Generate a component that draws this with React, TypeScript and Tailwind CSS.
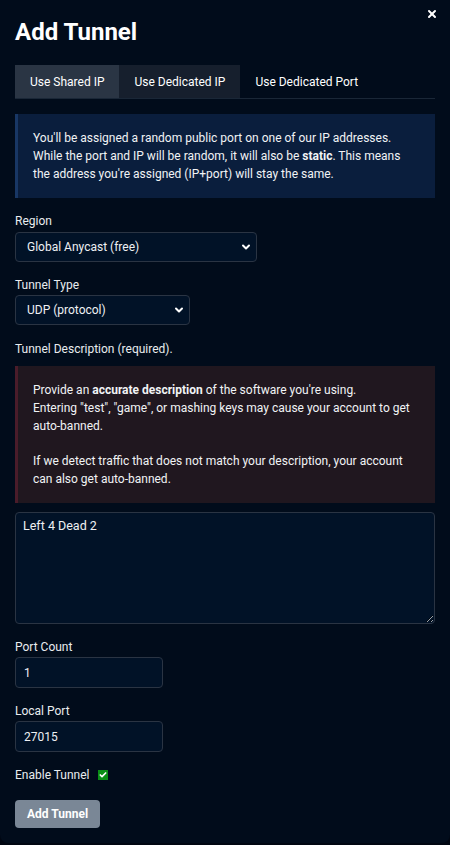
import { ChevronDown, X, Check } from 'lucide-react';

const tabs = [
  { label: 'Use Shared IP', cls: 'bg-[#2a3544]' },
  { label: 'Use Dedicated IP', cls: 'bg-[#161f2d]' },
  { label: 'Use Dedicated Port', cls: '' },
];

function Select({ value, width }: { value: string; width: string }) {
  return (
    <div
      className={`${width} h-[30px] flex items-center justify-between pl-[11px] pr-[4px] bg-[#011227] border border-[#2a3443] rounded-[4px] text-[12px] text-[#eef0f3]`}
    >
      <span>{value}</span>
      <ChevronDown className="w-[12px] h-[12px] text-white" strokeWidth={4} />
    </div>
  );
}

export default function App() {
  return (
    <div className="min-h-[845px] bg-[#000611] font-['Roboto','Liberation_Sans',sans-serif]">
      <div className="w-[450px] h-[843px] bg-[#010c1b] rounded-b-[8px] px-[15px] text-[#e9ecef] text-[12px] leading-[18px]">
        {/* Header */}
        <div className="flex justify-end pt-[8px] h-[20px]">
          <button className="-mr-[3px] text-white">
            <X className="w-[12px] h-[12px]" strokeWidth={4} />
          </button>
        </div>
        <h1 className="text-[24px] leading-[30px] font-bold text-white mt-[-3px]">Add Tunnel</h1>

        {/* Tabs */}
        <div className="flex mt-[18px] border-b border-[#1a2737]">
          {tabs.map((t) => (
            <div key={t.label} className={`h-[33px] px-[15px] flex items-center text-[12px] text-white ${t.cls}`}>
              {t.label}
            </div>
          ))}
        </div>

        {/* Info box */}
        <div className="mt-[15px] bg-[#0a1e3d] border-l-[3px] border-[#183765] pl-[15px] pr-[12px] pt-[15px] pb-[12px] leading-[18px] text-[#f1f3f5] h-[84px]">
          <p>You'll be assigned a random public port on one of our IP addresses.</p>
          <p>
            While the port and IP will be random, it will also be <b className="font-bold">static</b>. This means
          </p>
          <p>the address you're assigned (IP+port) will stay the same.</p>
        </div>

        {/* Region */}
        <div className="mt-[14px]">Region</div>
        <div className="mt-[2px]">
          <Select value="Global Anycast (free)" width="w-[242px]" />
        </div>

        <div className="mt-[14px]">Tunnel Type</div>
        <div className="mt-[1px]">
          <Select value="UDP (protocol)" width="w-[175px]" />
        </div>

        <div className="mt-[15px]">Tunnel Description (required).</div>

        {/* Warning box */}
        <div className="mt-[8px] bg-[#20171f] border-l-[3px] border-[#4a1c2a] pl-[15px] pr-[12px] pt-[15px] pb-[14px] h-[137px] text-[#f1f3f5]">
          <p>
            Provide an <b className="font-bold">accurate description</b> of the software you're using.
          </p>
          <p>Entering "test", "game", or mashing keys may cause your account to get auto-banned.</p>
          <p className="mt-[17px]">
            If we detect traffic that does not match your description, your account can also get auto-banned.
          </p>
        </div>

        <textarea
          defaultValue="Left 4 Dead 2"
          className="mt-[9px] block w-full h-[112px] bg-[#011227] border border-[#2a3443] rounded-[4px] px-[7px] pt-[4px] text-[12.5px] leading-[18px] text-[#eef0f3] outline-none"
        />

        <div className="mt-[14px]">Port Count</div>
        <input
          defaultValue="1"
          className="mt-[1px] block w-[148px] h-[31px] bg-[#011227] border border-[#2a3443] rounded-[4px] px-[8px] text-[12px] text-[#eef0f3] outline-none"
        />

        <div className="mt-[14px]">Local Port</div>
        <input
          defaultValue="27015"
          className="mt-[1px] block w-[148px] h-[31px] bg-[#011227] border border-[#2a3443] rounded-[4px] px-[8px] text-[12px] text-[#eef0f3] outline-none"
        />

        <div className="mt-[14px] flex items-center gap-[8px]">
          <span>Enable Tunnel</span>
          <span className="w-[10px] h-[10px] bg-[#0a8f16] flex items-center justify-center">
            <Check className="w-[8px] h-[8px] text-white" strokeWidth={5} />
          </span>
        </div>

        <button className="mt-[16px] h-[28px] px-[12px] rounded-[4px] bg-[#7a8796] text-white text-[12px] font-bold">
          Add Tunnel
        </button>
      </div>
    </div>
  );
}
